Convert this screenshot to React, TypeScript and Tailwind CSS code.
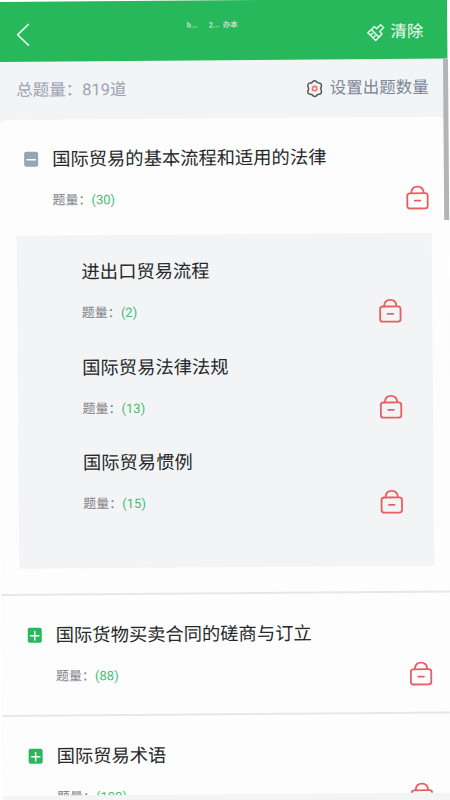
import { useState } from 'react';

type Section = {
  id: number;
  title: string;
  count: number;
  children?: { title: string; count: number }[];
};

const SECTIONS: Section[] = [
  {
    id: 1,
    title: '国际贸易的基本流程和适用的法律',
    count: 30,
    children: [
      { title: '进出口贸易流程', count: 2 },
      { title: '国际贸易法律法规', count: 13 },
      { title: '国际贸易惯例', count: 15 },
    ],
  },
  { id: 2, title: '国际货物买卖合同的磋商与订立', count: 88 },
  { id: 3, title: '国际贸易术语', count: 188 },
];

function LockIcon() {
  return (
    <svg width="24" height="26" viewBox="0 0 24 26" fill="none" stroke="#ea5e62" strokeWidth="1.8" strokeLinecap="round">
      <rect x="1.8" y="8.4" width="20.4" height="15.2" rx="2.6" />
      <path d="M5.8 8.2C6 4.3 8.5 1.8 12 1.8S18 4.3 18.2 8.2M9.2 15.8h5.6" />
    </svg>
  );
}

function BrushIcon() {
  return (
    <svg width="20" height="20" viewBox="0 0 20 20" fill="none" stroke="#e4f8ea" strokeWidth="1.5" strokeLinejoin="round" strokeLinecap="round">
      <path d="M8.2 4.4 10.6 6.6 14.4 2.6 17.4 5.4 13.6 9.4 15.8 11.8 12.6 15 5.2 7.4Z" />
      <path d="M5.2 7.4 1.6 10.4 9.4 18.4 12.6 15M4.4 13l2-2M6.9 15.6l2-2" />
    </svg>
  );
}

function GearIcon() {
  return (
    <svg width="18" height="18" viewBox="0 0 18 18" fill="none">
      <path
        d="M9 1.1C10.7 1.1 10.8 2.5 12 3.1S14.6 3 15.6 4.6 15.1 7.4 15.1 9 16.5 11.7 15.6 13.4 13.2 14.3 12 14.9 10.7 16.9 9 16.9 7.2 15.5 6 14.9 3.4 15 2.4 13.4 2.9 10.6 2.9 9 1.5 6.3 2.4 4.6 4.8 3.7 6 3.1 7.3 1.1 9 1.1Z"
        stroke="#55585e"
        strokeWidth="1.5"
      />
      <circle cx="9" cy="9" r="2.2" stroke="#f0765c" strokeWidth="1.6" />
    </svg>
  );
}

function Toggle({ open, onClick }: { open: boolean; onClick: () => void }) {
  return (
    <button
      onClick={onClick}
      className={`flex size-[14.5px] shrink-0 items-center justify-center rounded-[2px] ${open ? 'bg-[#98a3b5]' : 'bg-[#28b85c]'}`}
    >
      <svg width="14" height="14" viewBox="0 0 14 14" stroke="#fff" strokeWidth="1.5" strokeLinecap="round">
        <path d={open ? 'M2.8 7h8.4' : 'M2.8 7h8.4M7 2.8v8.4'} />
      </svg>
    </button>
  );
}

function CountRow({ count }: { count: number }) {
  return (
    <div className="flex h-6 items-center justify-between">
      <span className="text-[13px] text-[#85878a]">
        题量：<span className="text-[#45bd70]">({count})</span>
      </span>
      <LockIcon />
    </div>
  );
}

export default function App() {
  const [openId, setOpenId] = useState<number | null>(1);

  return (
    <div className="h-[800px] w-[450px] overflow-hidden bg-white font-['Roboto','Noto_Sans_CJK_SC',sans-serif]">
      <div className="mt-[2px] -ml-[3px] h-[810px] w-[450px] origin-top-left rotate-[-0.43deg] bg-[#f2f4f6]">
        <header className="flex h-[60px] items-center justify-between bg-[#28b85c] pr-[24px] pb-[1px] pl-[19px] text-[#e9faee]">
          <svg width="14" height="24" viewBox="0 0 14 24" fill="none" stroke="currentColor" strokeWidth="1.6" className="mt-[6px]">
            <path d="M12.6 1.2 1.4 12 12.6 22.8" />
          </svg>
          <div className="flex pb-[10px] pl-[28px] text-[7.5px] leading-none font-bold text-[#c4dfc8]">
            <span className="w-[22px]">b...</span>
            <span className="w-[14px]">2...</span>
            <span>办本</span>
          </div>
          <button className="flex items-center gap-[4px] pt-[6px] text-[16.4px] leading-6">
            <BrushIcon />
            清除
          </button>
        </header>

        <div className="flex h-[58px] items-center justify-between pr-[19px] pl-[18.5px] text-[16.5px]">
          <span className="text-[#9aa3b4]">总题量：819道</span>
          <button className="flex items-center gap-[6px] text-[#7c8696]">
            <GearIcon />
            设置出题数量
          </button>
        </div>

        <main className="h-[676px] w-full overflow-hidden rounded-t-[10px] bg-[#fdfdfd]">
          {SECTIONS.map((s) => (
            <section key={s.id} className="border-b-2 border-[#e6e7e9]">
              <div className="pt-[26px] pr-[19px] pb-[26px] pl-[25.5px]">
                <div className="flex h-[27px] items-center gap-[14px]">
                  <Toggle open={openId === s.id} onClick={() => setOpenId(openId === s.id ? null : s.id)} />
                  <h2 className="text-[18.3px] whitespace-nowrap text-[#27282a]">{s.title}</h2>
                </div>
                <div className="pt-[16px] pl-[28.5px]">
                  <CountRow count={s.count} />
                </div>
              </div>
              {openId === s.id && s.children && (
                <div className="-mt-[3px] mb-[25px] ml-[18px] h-[333px] w-[415px] bg-[#f2f4f6] pt-[24px] pr-[30px] pl-[64.5px]">
                  {s.children.map((c) => (
                    <div key={c.title} className="h-[95.5px]">
                      <h3 className="h-[26px] text-[18.3px] leading-[26px] text-[#27282a]">{c.title}</h3>
                      <div className="pt-[16px]">
                        <CountRow count={c.count} />
                      </div>
                    </div>
                  ))}
                </div>
              )}
            </section>
          ))}
        </main>
      </div>
      {/* scroll thumb */}
      <div className="absolute top-[59px] left-[443px] h-[161px] w-[5px] origin-top-left rotate-[-0.43deg] bg-[#b3b4b5]" />
    </div>
  );
}
